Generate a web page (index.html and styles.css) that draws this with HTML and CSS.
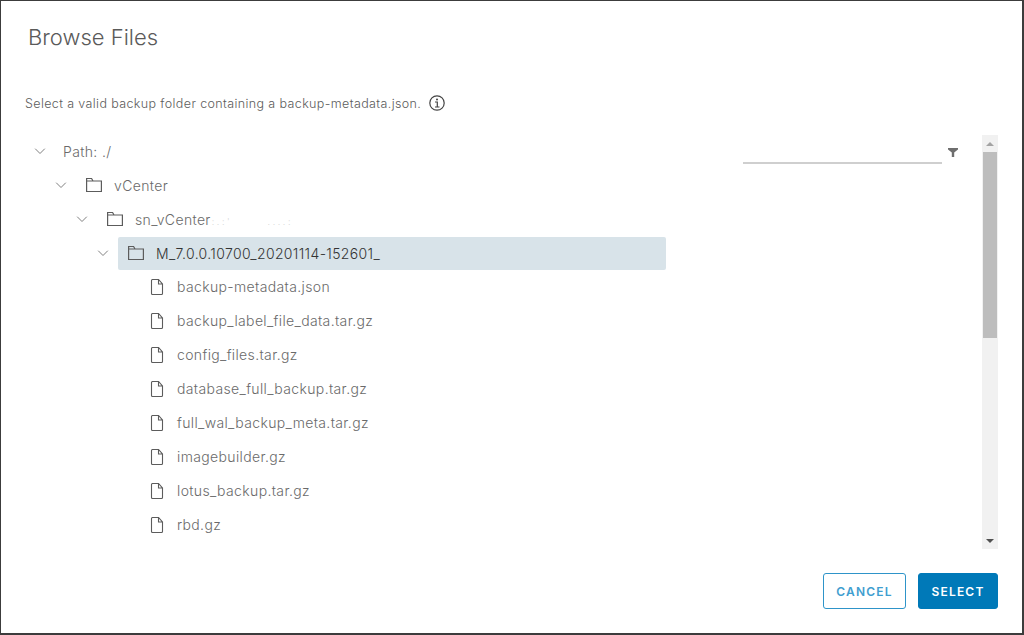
FILE: index.html
```html
<!DOCTYPE html>
<html lang="en">
<head>
<meta charset="utf-8">
<title>Browse Files</title>
<link rel="stylesheet" href="styles.css">
</head>
<body>
<svg class="defs" width="0" height="0" aria-hidden="true">
  <symbol id="chev" viewBox="0 0 14 14"><path d="M2.200 4.700 7 9.500l4.800-4.800" fill="none" stroke="currentColor" stroke-width="1"/></symbol>
  <symbol id="folder" viewBox="0 0 16 16"><path d="M.6 14.500V1.500h5l1.400 2.500h8.400v10.500zM.6 4h6.400" fill="none" stroke="currentColor" stroke-width="1.200"/></symbol>
  <symbol id="file" viewBox="0 0 16 16"><path d="M2.500 1.500a1 1 0 0 1 1-1h6l4 4.500v9.500a1 1 0 0 1-1 1h-9a1 1 0 0 1-1-1zM9.500.5v4.500h4" fill="none" stroke="currentColor" stroke-width="1.100"/></symbol>
</svg>
<main class="dialog">
  <h1 class="title">Browse Files</h1>
  <p class="intro">Select a valid backup folder containing a backup-metadata.json.
    <svg class="info" viewBox="0 0 16 16" aria-hidden="true"><circle cx="8" cy="8" r="7.200" fill="none" stroke="currentColor" stroke-width="1.200"/><circle cx="8" cy="4.500" r="1" fill="currentColor"/><path d="M6 7h2.300v5M6 12h4.500" fill="none" stroke="currentColor" stroke-width="1.200"/></svg>
  </p>
  <div class="browser">
    <div class="tree">
      <div class="row l0"><svg class="chev"><use href="#chev"/></svg><span class="node path">Path: ./</span></div>
      <div class="row l1"><svg class="chev"><use href="#chev"/></svg><span class="node"><svg class="ico"><use href="#folder"/></svg>vCenter</span></div>
      <div class="row l2"><svg class="chev"><use href="#chev"/></svg><span class="node"><svg class="ico"><use href="#folder"/></svg><span>sn_vCenter<span class="redacted">: . : '</span><span class="redacted far">. . . . :</span></span></span></div>
      <div class="row l3"><svg class="chev"><use href="#chev"/></svg><span class="node selected"><svg class="ico"><use href="#folder"/></svg>M_7.0.0.10700_20201114-152601_</span></div>
      <div class="row l4"><span class="chev"></span><span class="node"><svg class="ico"><use href="#file"/></svg>backup-metadata.json</span></div>
      <div class="row l4"><span class="chev"></span><span class="node"><svg class="ico"><use href="#file"/></svg>backup_label_file_data.tar.gz</span></div>
      <div class="row l4"><span class="chev"></span><span class="node"><svg class="ico"><use href="#file"/></svg>config_files.tar.gz</span></div>
      <div class="row l4"><span class="chev"></span><span class="node"><svg class="ico"><use href="#file"/></svg>database_full_backup.tar.gz</span></div>
      <div class="row l4"><span class="chev"></span><span class="node"><svg class="ico"><use href="#file"/></svg>full_wal_backup_meta.tar.gz</span></div>
      <div class="row l4"><span class="chev"></span><span class="node"><svg class="ico"><use href="#file"/></svg>imagebuilder.gz</span></div>
      <div class="row l4"><span class="chev"></span><span class="node"><svg class="ico"><use href="#file"/></svg>lotus_backup.tar.gz</span></div>
      <div class="row l4"><span class="chev"></span><span class="node"><svg class="ico"><use href="#file"/></svg>rbd.gz</span></div>
    </div>
    <div class="filter">
      <span class="filter-line"></span>
      <svg class="filter-ico" viewBox="0 0 10 9" aria-hidden="true"><path d="M0 0h10v1.500L6.200 4.500V9H3.800V4.500L0 1.500z" fill="currentColor"/></svg>
    </div>
    <div class="scrollbar">
      <span class="arrow up"></span>
      <span class="thumb"></span>
      <span class="arrow down"></span>
    </div>
  </div>
  <footer class="actions">
    <button class="btn outline" type="button">CANCEL</button>
    <button class="btn primary" type="button">SELECT</button>
  </footer>
</main>
</body>
</html>
```
FILE: styles.css
```css
* { box-sizing: border-box; }
html, body { margin: 0; height: 100%; }
body {
  background: #fff;
  font-family: "Inter", "Open Sans", sans-serif;
  color: #666;
  overflow: hidden;
}
.defs { position: absolute; }
.dialog {
  width: 1024px;
  height: 635px;
  border: solid #3c3c3c;
  border-width: 1px 2px 2px 1px;
  display: flex;
  flex-direction: column;
  background: #fff;
}
.title {
  margin: 0;
  padding: 24px 0 0 27px;
  font-size: 22px;
  line-height: 24px;
  font-weight: 300;
  color: #5a5a5a;
}
.intro {
  margin: 0;
  padding: 34px 0 0 24px;
  height: 74px;
  display: flex;
  align-items: center;
  gap: 8px;
  font-size: 12.500px;
  font-weight: 300;
  letter-spacing: 0.38px;
  color: #5c5c5c;
}
.info { width: 16px; height: 16px; color: #444; }
.browser {
  height: 415px;
  margin-top: 11px;
  display: flex;
  padding-left: 32px;
}
.tree { width: 633px; flex: none; }
.row {
  height: 34px;
  display: flex;
  align-items: center;
  font-size: 14px;
  font-weight: 300;
  letter-spacing: 0.36px;
  color: #6a6a6a;
}
.l1 { padding-left: 21px; }
.l2 { padding-left: 42px; }
.l3 { padding-left: 63px; }
.l4 { padding-left: 84px; }
.chev { width: 14px; height: 14px; flex: none; color: #808080; margin-right: 8px; }
.node {
  height: 33px;
  flex: 1;
  display: flex;
  align-items: center;
  padding: 0 0 0 10px;
  gap: 12px;
  white-space: nowrap;
}
.l4 .node { padding-bottom: 1px; }
.node.path { padding-left: 8px; }
.ico { width: 16px; height: 16px; flex: none; color: #5c5c5c; }
.selected {
  background: #d8e3e9;
  border-radius: 2px;
  color: #333;
}
.redacted { color: #d4d4d4; margin-left: 1px; font-size: 9px; letter-spacing: 0; }
.far { margin-left: 38px; }
.filter {
  flex: none;
  margin: 1px 0 0 77px;
  width: 239px;
  height: 29px;
  display: flex;
  align-items: flex-start;
  gap: 6px;
}
.filter-line { width: 199px; height: 29px; border-bottom: 2px solid #cfcfcf; flex: none; }
.filter-ico { width: 10px; height: 9px; margin-top: 13px; color: #6e6e6e; flex: none; }
.scrollbar {
  margin-top: 1px;
  width: 16px;
  flex: none;
  background: #f1f1f1;
  display: flex;
  flex-direction: column;
  align-items: center;
}
.arrow { height: 17px; flex: none; display: flex; align-items: center; }
.arrow::before {
  content: "";
  border-left: 4px solid transparent;
  border-right: 4px solid transparent;
}
.up::before { border-bottom: 4px solid #a3a3a3; }
.down::before { border-top: 4px solid #505050; }
.thumb { width: 14px; height: 186px; background: #bdbdbd; flex: none; }
.down { margin-top: auto; }
.actions {
  display: flex;
  justify-content: flex-end;
  gap: 12px;
  padding: 24px 24px 0 0;
}
.btn {
  height: 36px;
  border-radius: 3px;
  font-family: "Inter", "Open Sans", sans-serif;
  font-size: 12px;
  font-weight: 600;
  letter-spacing: 1.200px;
  padding: 0;
}
.outline { width: 83px; background: #fff; border: 1px solid #2e94c9; color: #3f9ed0; }
.primary { width: 80px; background: #0079b8; border: 1px solid #0079b8; color: #fff; }
```
